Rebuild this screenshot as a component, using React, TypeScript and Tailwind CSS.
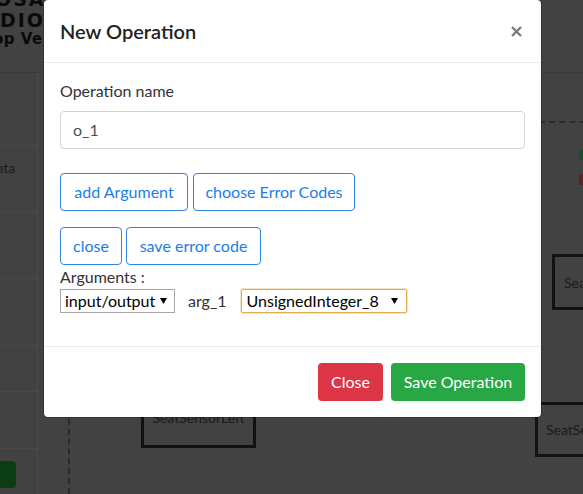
import React from "react";

function Caret() {
  return (
    <svg width="7" height="6" viewBox="0 0 7 6" className="shrink-0">
      <polygon points="0,0 7,0 3.5,6" fill="#000" />
    </svg>
  );
}

function OutlineBtn({ children, w }: { children: React.ReactNode; w: string }) {
  return (
    <button
      className={`${w} h-[38px] shrink-0 rounded-[4px] border border-[#2f84e0] bg-white text-[16px] leading-6 text-[#1a7ee8]`}
    >
      {children}
    </button>
  );
}

function Background() {
  return (
    <div className="absolute inset-0 flex flex-col bg-[#424242]">
      {/* header bar */}
      <div className="relative h-[73px] shrink-0 border-b border-[#3a3a3a] font-['DejaVu_Sans',sans-serif] font-black text-[#0a0a0a]">
        <div className="absolute left-[-5px] top-[-10px] text-[19px] leading-[19px] tracking-[2px]">OSA</div>
        <div className="absolute left-[0px] top-[11px] text-[19px] leading-[19px] tracking-[2px]">DIO</div>
        <div className="absolute left-[-7px] top-[32px] text-[15px] leading-[15px] tracking-[0.5px]">op Ve</div>
      </div>
      <div className="flex flex-1">
        {/* left panel */}
        <div className="flex w-[38px] shrink-0 flex-col border-r border-[#4a4a4a]">
          <div className="h-[73px] border-b border-[#4a4a4a]" />
          <div className="h-[66px] border-b border-[#4a4a4a] pt-[14px] font-['Lato',sans-serif] text-[14px] leading-4 text-[#1c1c1c]">
            <span className="ml-[-14px]">Data</span>
          </div>
          <div className="h-[67px] border-b border-[#4a4a4a]" />
          <div className="h-[67px] border-b border-[#4a4a4a]" />
          <div className="h-[46px] border-b border-[#4a4a4a]" />
          <div className="h-[57px] border-b border-[#4a4a4a]" />
          <div className="flex-1 pt-[12px]">
            <div className="ml-[-10px] h-[27px] w-[26px] rounded-[4px] bg-[#0c3c13]" />
          </div>
        </div>
        {/* diagram canvas */}
        <div className="relative flex-1">
          <div className="absolute left-[30px] top-[0px] h-[421px] border-l-2 border-dashed border-[#2a2a2a]" />
          <div className="absolute left-[460px] top-[48px] w-[200px] border-t-2 border-dashed border-[#2a2a2a]" />
          <div className="absolute left-[541px] top-[77px] h-[10px] w-[6px] bg-[#1d4a26]" />
          <div className="absolute left-[541px] top-[101px] h-[11px] w-[6px] bg-[#5a2326]" />
          <div className="absolute left-[103px] top-[310px] flex h-[65px] w-[115px] items-end justify-center border-[3px] border-[#121212] pb-[19px] font-['Lato',sans-serif] text-[14px] leading-4 text-[#1a1a1a]">
            SeatSensorLeft
          </div>
          <div className="absolute left-[514px] top-[181px] flex h-[56px] w-[115px] items-center border-[3px] border-[#121212] pl-[9px] font-['Lato',sans-serif] text-[14px] text-[#1a1a1a]">
            SeatSensorRight
          </div>
          <div className="absolute left-[497px] top-[329px] flex h-[55px] w-[115px] items-center border-[3px] border-[#121212] pl-[8px] font-['Lato',sans-serif] text-[14px] text-[#1a1a1a]">
            SeatSensor
          </div>
        </div>
      </div>
    </div>
  );
}

export default function App() {
  return (
    <div className="relative h-[494px] w-[583px] overflow-hidden">
      <Background />
      {/* modal dialog */}
      <div className="absolute left-[43px] top-[-1px] w-[499px] rounded-[5px] border border-black/20 bg-white bg-clip-padding font-['Lato',sans-serif] text-[#212529]">
        <div className="flex items-start justify-between border-b border-[#e9ecef] p-4">
          <h5 className="text-[20px] font-semibold leading-[30px] text-[#222]">New Operation</h5>
          <button className="mr-[3px] mt-[10px] flex h-[11px] w-[11px] items-center justify-center">
            <svg width="11" height="11" viewBox="0 0 11 11">
              <path d="M1 1 L10 10 M10 1 L1 10" stroke="#7a7a7a" strokeWidth="2.3" strokeLinecap="butt" />
            </svg>
          </button>
        </div>
        <div className="px-4 pb-[33px] pt-4">
          <label className="mb-2 block text-[16px] leading-6 text-[#333]">Operation name</label>
          <div className="mb-6 flex h-[38px] items-center rounded-[4px] border border-[#ced4da] px-3 text-[16px] text-[#495057]">
            o_1
          </div>
          <div className="mb-4 flex gap-[5px]">
            <OutlineBtn w="w-[128px]">add Argument</OutlineBtn>
            <OutlineBtn w="w-[162px]">choose Error Codes</OutlineBtn>
          </div>
          <div className="flex gap-[4px]">
            <OutlineBtn w="w-[62px]">close</OutlineBtn>
            <OutlineBtn w="w-[135px]">save error code</OutlineBtn>
          </div>
          <div className="text-[16px] leading-6 text-[#333]">Arguments :</div>
          <div className="flex items-center">
            <div className="flex h-[24px] w-[115px] items-center border border-[#a6a6a6] pl-[4px] pr-[7px] text-[16px] text-black">
              <span className="flex-1">input/output</span>
              <Caret />
            </div>
            <span className="ml-[13px] mr-[14px] text-[16px] text-[#333]">arg_1</span>
            <div className="flex h-[24px] w-[166px] items-center rounded-[2px] border border-[#e3ad4f] pl-[5px] pr-[8px] text-[16px] text-black shadow-[0_0_0_1px_#f6e2bd]">
              <span className="flex-1">UnsignedInteger_8</span>
              <Caret />
            </div>
          </div>
        </div>
        <div className="flex justify-end gap-2 border-t border-[#e9ecef] p-4">
          <button className="h-[38px] w-[65px] rounded-[4px] bg-[#dc3545] text-[16px] text-white">Close</button>
          <button className="h-[38px] w-[134px] rounded-[4px] bg-[#28a745] text-[16px] text-white">Save Operation</button>
        </div>
      </div>
    </div>
  );
}
